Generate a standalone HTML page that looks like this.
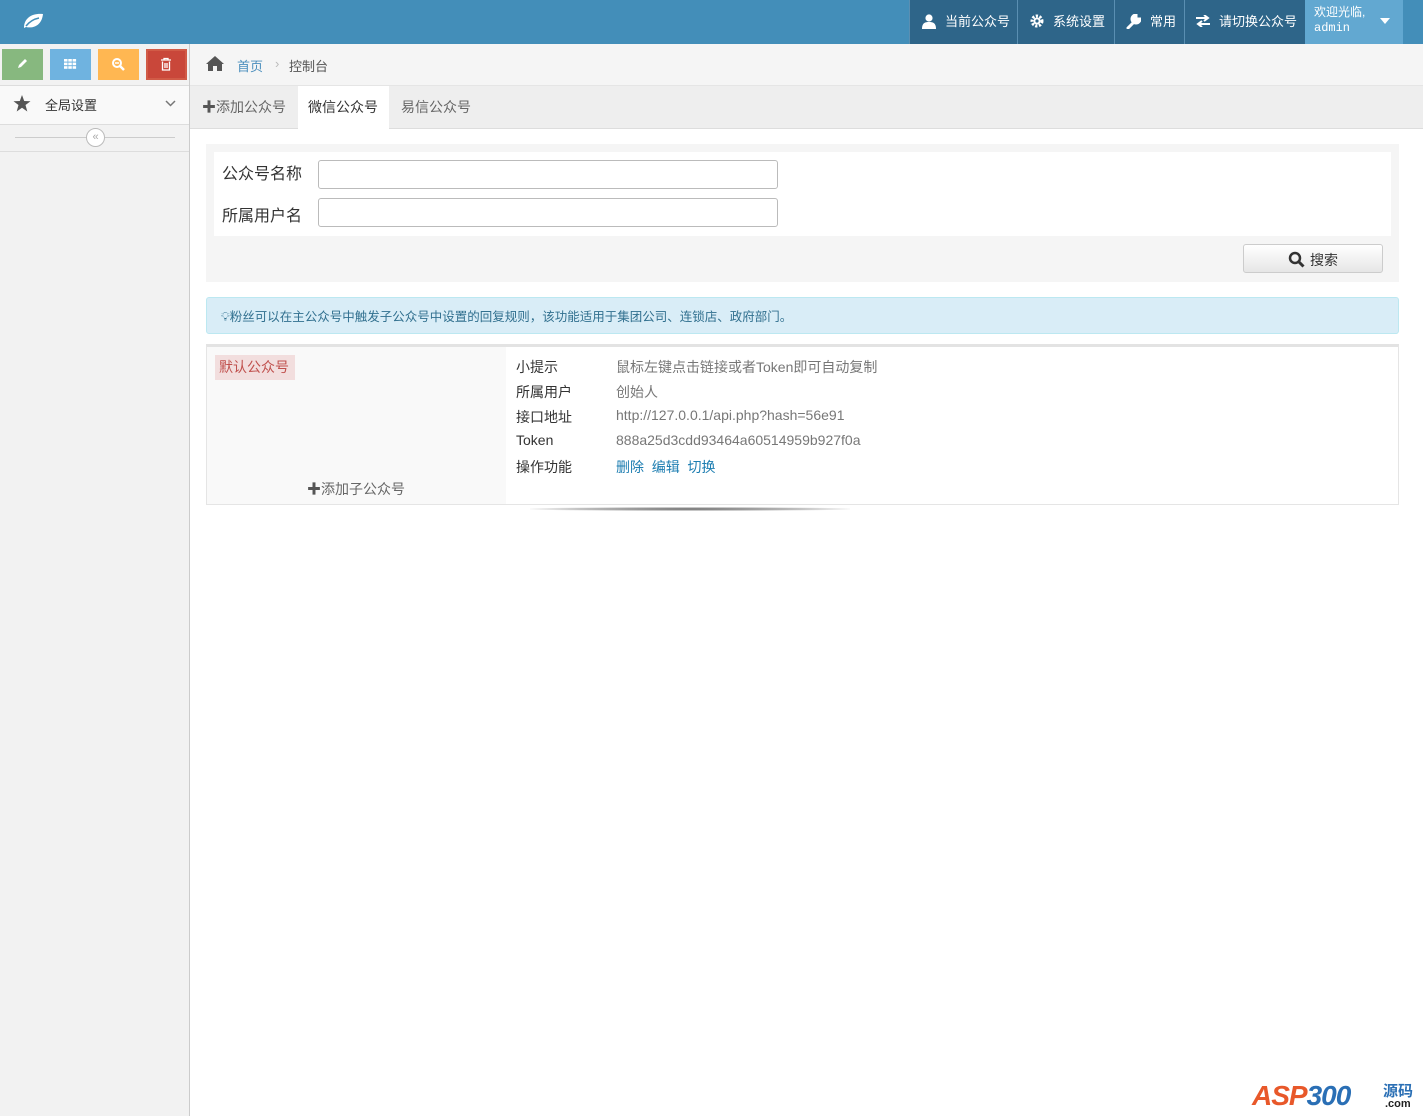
<!DOCTYPE html>
<html><head><meta charset="utf-8"><style>
*{box-sizing:border-box;margin:0;padding:0}
body{width:1423px;height:1116px;background:#fff;font-family:"Liberation Sans","Noto Sans CJK SC",sans-serif;font-size:13px;color:#393939;position:relative;overflow:hidden}
.abs{position:absolute}
.hdr{left:0;top:0;width:1423px;height:44px;background:#438eb9}
.nav{top:0;height:44px;background:#2e6589;color:#fff;font-size:13px;line-height:44px;border-left:1px solid #5a8fb2}
.nav svg{position:absolute;top:14px}
.nav span{position:absolute}
.side{left:0;top:44px;width:190px;height:1072px;background:#f2f2f2;border-right:1px solid #ccc}
.btn{top:49px;width:41px;height:31px}
.btn svg{position:absolute;left:13px;top:8px}
.bc{left:190px;top:44px;width:1233px;height:42px;background:#f5f5f5;border-bottom:1px solid #e5e5e5}
.tabs{left:190px;top:86px;width:1233px;height:43px;background:#eee;border-bottom:1px solid #ddd}
.tab{top:86px;height:42px;line-height:42px;font-size:14px;color:#666;padding:0 10px}
input{position:absolute;border:1px solid #bbb;border-radius:3px;background:#fff}
.lbl{font-size:16px;color:#333}
.k{left:516px;font-size:14px;color:#333}
.v{left:616px;font-size:14px;color:#777}
</style></head><body>
<div class="abs hdr"></div>
<svg class="abs" style="left:22px;top:12px" width="22" height="18" viewBox="0 0 22 18"><path d="M2 16 C2 6 10 1 21 2 C20 12 13 17 4 15 Z" fill="#fff"/><path d="M4 14 C8 9 12 7 17 6" stroke="#438eb9" stroke-width="1.5" fill="none"/></svg>
<div class="abs nav" style="left:909px;width:108px"><svg style="left:12px" width="14" height="15" viewBox="0 0 14 15"><circle cx="7" cy="4" r="3.6" fill="#fff"/><path d="M0 15 C0 9 3 8 7 8 C11 8 14 9 14 15Z" fill="#fff"/></svg><span style="left:35px">当前公众号</span></div>
<div class="abs nav" style="left:1017px;width:97px"><svg style="left:12px" width="14" height="14" viewBox="0 0 14 14"><circle cx="7" cy="7" r="5" fill="none" stroke="#fff" stroke-width="3" stroke-dasharray="2.2 1.5"/><circle cx="7" cy="7" r="3.5" fill="#fff"/><circle cx="7" cy="7" r="1.6" fill="#2e6589"/></svg><span style="left:35px">系统设置</span></div>
<div class="abs nav" style="left:1114px;width:70px"><svg style="left:11px" width="15" height="15" viewBox="0 0 15 15"><path d="M2 14 L9 7 M10 1 A4 4 0 1 0 14 5 L11 5 L10 4Z" stroke="#fff" stroke-width="3" fill="#fff" stroke-linecap="round"/></svg><span style="left:35px">常用</span></div>
<div class="abs nav" style="left:1184px;width:121px"><svg style="left:10px;top:15px" width="16" height="12" viewBox="0 0 16 12"><path d="M1 3 H12 M9 0 L13 3 L9 6 M15 9 H4 M7 6 L3 9 L7 12" stroke="#fff" stroke-width="2" fill="none"/></svg><span style="left:34px">请切换公众号</span></div>
<div class="abs" style="left:1305px;top:0;width:98px;height:44px;background:#62a8d1;color:#fff;font-size:12px;padding:5px 0 0 9px;line-height:15px">欢迎光临,<br><span style="font-family:'Liberation Mono',monospace">admin</span><svg class="abs" style="left:75px;top:18px" width="10" height="6"><path d="M0 0H10L5 6Z" fill="#fff"/></svg></div>

<div class="abs side"></div>
<div class="abs btn" style="left:2px;background:#87b87f"><svg width="14" height="14" viewBox="0 0 14 14"><path d="M3 11 L4 8 L10 2 L12 4 L6 10Z" fill="#fff"/></svg></div>
<div class="abs btn" style="left:50px;background:#6fb3e0"><svg width="14" height="14" viewBox="0 0 14 14" fill="#fff"><rect x="1" y="2" width="3.5" height="2.6"/><rect x="5.3" y="2" width="3.5" height="2.6"/><rect x="9.6" y="2" width="3.5" height="2.6"/><rect x="1" y="5.6" width="3.5" height="2.6"/><rect x="5.3" y="5.6" width="3.5" height="2.6"/><rect x="9.6" y="5.6" width="3.5" height="2.6"/><rect x="1" y="9.2" width="3.5" height="2.6"/><rect x="5.3" y="9.2" width="3.5" height="2.6"/><rect x="9.6" y="9.2" width="3.5" height="2.6"/></svg></div>
<div class="abs btn" style="left:98px;background:#ffb752"><svg width="14" height="14" viewBox="0 0 14 14"><circle cx="6" cy="6" r="4" stroke="#fff" stroke-width="2" fill="none"/><path d="M9 9 L13 13" stroke="#fff" stroke-width="2.5"/><path d="M4 6H8" stroke="#fff" stroke-width="1.5"/></svg></div>
<div class="abs btn" style="left:146px;background:#c9473a;border:2px solid #d15b47"><svg style="left:11px;top:6px" width="14" height="14" viewBox="0 0 14 14"><path d="M2 3H12 M5 3V1.5H9V3 M3.5 4.5V13H10.5V4.5 M6 6V11 M8 6V11" stroke="#fff" stroke-width="1.3" fill="none"/></svg></div>
<div class="abs" style="left:0;top:85px;width:189px;height:40px;border-top:1px solid #ddd;border-bottom:1px solid #ddd;background:#f9f9f9"></div>
<svg class="abs" style="left:13px;top:95px" width="18" height="17" viewBox="0 0 18 17"><path d="M9 0 L11.2 6 L17.5 6.2 L12.5 10 L14.3 16.5 L9 12.7 L3.7 16.5 L5.5 10 L0.5 6.2 L6.8 6Z" fill="#555"/></svg>
<div class="abs" style="left:45px;top:95px;color:#333">全局设置</div>
<svg class="abs" style="left:165px;top:100px" width="11" height="7"><path d="M1 1L5.5 5.5L10 1" stroke="#777" stroke-width="1.5" fill="none"/></svg>
<div class="abs" style="left:15px;top:137px;width:160px;border-top:1px solid #ccc"></div>
<div class="abs" style="left:86px;top:128px;width:19px;height:19px;border:1px solid #bbb;border-radius:50%;background:#fff;color:#aaa;font-size:11px;line-height:16px;text-align:center">«</div>
<div class="abs" style="left:0;top:151px;width:189px;border-top:1px solid #ddd"></div>

<div class="abs bc"></div>
<svg class="abs" style="left:206px;top:56px" width="18" height="15" viewBox="0 0 18 15"><path d="M9 0 L18 8 L16 8 L16 15 L11 15 L11 10 L7 10 L7 15 L2 15 L2 8 L0 8Z" fill="#555"/></svg>
<div class="abs" style="left:237px;top:56px;color:#4c8fbd">首页</div>
<div class="abs" style="left:275px;top:56px;color:#bbb">›</div>
<div class="abs" style="left:289px;top:56px;color:#555">控制台</div>
<div class="abs tabs"></div>
<div class="abs tab" style="left:192px"><b style="color:#555">✚</b>添加公众号</div>
<div class="abs tab" style="left:298px;width:91px;background:#fff;color:#333;height:43px">微信公众号</div>
<div class="abs tab" style="left:391px">易信公众号</div>

<div class="abs" style="left:206px;top:144px;width:1193px;height:138px;background:#f5f5f5"></div>
<div class="abs" style="left:214px;top:152px;width:1177px;height:84px;background:#fff"></div>
<div class="abs lbl" style="left:222px;top:160px">公众号名称</div>
<div class="abs lbl" style="left:222px;top:202px">所属用户名</div>
<input style="left:318px;top:160px;width:460px;height:29px">
<input style="left:318px;top:198px;width:460px;height:29px">
<div class="abs" style="left:1243px;top:244px;width:140px;height:29px;border:1px solid #ccc;border-radius:3px;background:linear-gradient(#fff,#e6e6e6);font-size:14px;color:#333"><svg class="abs" style="left:44px;top:6px" width="17" height="17" viewBox="0 0 17 17"><circle cx="7" cy="7" r="5" stroke="#333" stroke-width="2.5" fill="none"/><path d="M10.5 10.5L15.5 15.5" stroke="#333" stroke-width="3"/></svg><span class="abs" style="left:66px;top:5px">搜索</span></div>

<div class="abs" style="left:206px;top:297px;width:1193px;height:37px;background:#d9edf7;border:1px solid #bce8f1;border-radius:3px;color:#31708f;padding:8px 0 0 14px;font-size:12.5px">💡︎粉丝可以在主公众号中触发子公众号中设置的回复规则，该功能适用于集团公司、连锁店、政府部门。</div>

<div class="abs" style="left:206px;top:344px;width:1193px;height:161px;border:1px solid #e5e5e5;border-top:3px solid #e3e3e3"></div>
<div class="abs" style="left:207px;top:347px;width:299px;height:157px;background:#f9f9f9"></div>
<div class="abs" style="left:215px;top:355px;width:80px;height:25px;background:#f2dede;color:#c0504d;font-size:14px;line-height:25px;padding-left:4px">默认公众号</div>
<div class="abs" style="left:307px;top:479px;font-size:14px;color:#666"><b style="color:#555">✚</b>添加子公众号</div>
<div class="abs k" style="top:357px">小提示</div><div class="abs v" style="top:357px">鼠标左键点击链接或者Token即可自动复制</div>
<div class="abs k" style="top:382px">所属用户</div><div class="abs v" style="top:382px">创始人</div>
<div class="abs k" style="top:407px">接口地址</div><div class="abs v" style="top:407px">http://127.0.0.1/api.php?hash=56e91</div>
<div class="abs k" style="top:432px">Token</div><div class="abs v" style="top:432px">888a25d3cdd93464a60514959b927f0a</div>
<div class="abs k" style="top:457px">操作功能</div><div class="abs v" style="top:457px;color:#1c7db1">删除&nbsp;&nbsp;编辑&nbsp;&nbsp;切换</div>
<div class="abs" style="left:530px;top:507px;width:320px;height:4px;background:radial-gradient(ellipse at center,#666 0%,#bbb 50%,transparent 75%)"></div>

<div class="abs" style="left:1252px;top:1080px;font-size:28px;font-weight:bold;font-style:italic;color:#e8582a;letter-spacing:-1px">ASP<span style="color:#2a6fb5">300</span></div>
<div class="abs" style="left:1383px;top:1080px;font-size:15px;font-weight:bold;color:#2a6fb5">源码</div>
<div class="abs" style="left:1385px;top:1098px;font-size:11px;font-weight:bold;color:#222">.com</div>
</body></html>
